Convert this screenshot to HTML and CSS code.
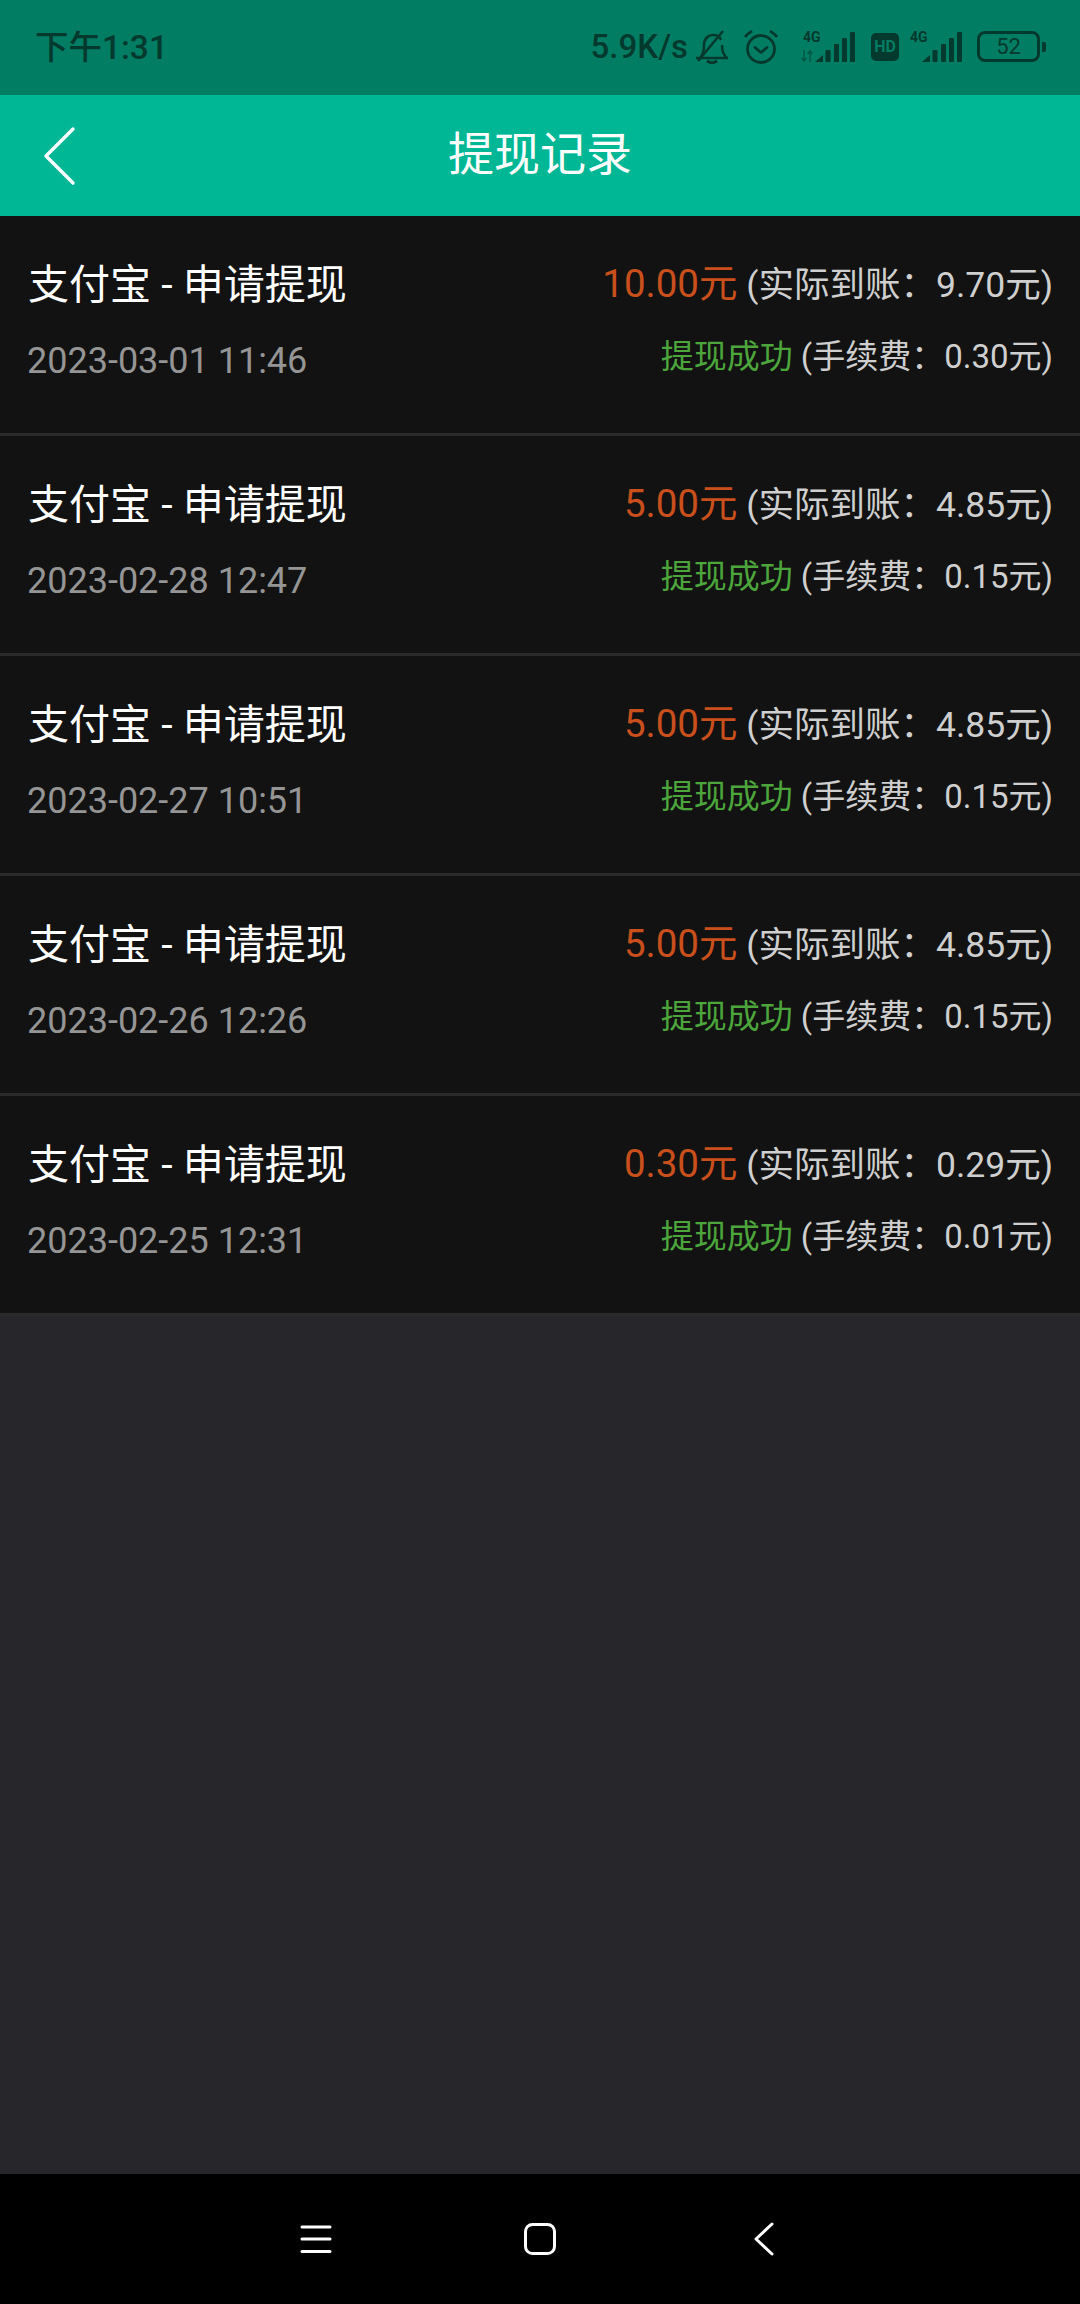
FILE: index.html
```html
<!DOCTYPE html>
<html>
<head>
  <title>提现记录</title>
  <link rel="stylesheet" href="styles.css">
</head>
<body>
  <div class="app">
    <div class="status-bar">
      <div class="status-time">下午1:31</div>
      <div class="status-icons">
        <span class="net-speed">5.9K/s</span>
        <svg class="icon-bell" width="34" height="34" viewBox="0 0 34 34" fill="none" stroke="#04392d" stroke-width="2.6">
          <path d="M1 28h32M5 28c3-3 4-7 4-13 0-6 4-10 9-10 4 0 7 2 8 5M27 15c0 6 1 10 5 13"/>
          <path d="M12 31c3 2 7 2 10 0" stroke-width="3"/>
          <path d="M3 31L28 1"/>
        </svg>
        <svg class="icon-alarm" width="36" height="34" viewBox="0 0 36 34" fill="none" stroke="#04392d" stroke-width="2.8">
          <circle cx="18" cy="19" r="13.500"/>
          <path d="M12 17.500l6 5 6-5" stroke-linecap="round" stroke-linejoin="round"/>
          <path d="M2 7c2-3 4-4 7-6M34 7c-2-3-4-4-7-6"/>
        </svg>
        <div class="signal sim1">
          <span class="net-type">4G</span>
          <svg class="arrows" width="12" height="12" viewBox="0 0 12 12" fill="none" stroke="#04392d" stroke-width="1.400" opacity="0.55">
            <path d="M3 0v11M0.500 8l2.500 3 2.500-3M9 12V1M6.500 4L9 1l2.500 3"/>
          </svg>
          <svg class="bars" width="40" height="30" viewBox="0 0 40 30" fill="#04392d">
            <path d="M0 30L8 23V30Z"/>
            <rect x="10.500" y="18" width="5" height="12" rx="1"/>
            <rect x="19" y="12" width="5" height="18" rx="1"/>
            <rect x="27" y="6" width="5" height="24" rx="1"/>
            <rect x="35" y="0" width="5" height="30" rx="1"/>
          </svg>
        </div>
        <span class="hd-badge">HD</span>
        <div class="signal sim2">
          <span class="net-type">4G</span>
          <svg class="bars" width="40" height="30" viewBox="0 0 40 30" fill="#04392d">
            <path d="M0 30L8 23V30Z"/>
            <rect x="10.500" y="18" width="5" height="12" rx="1"/>
            <rect x="19" y="12" width="5" height="18" rx="1"/>
            <rect x="27" y="6" width="5" height="24" rx="1"/>
            <rect x="35" y="0" width="5" height="30" rx="1"/>
          </svg>
        </div>
        <div class="battery">
          <div class="battery-body">52</div>
          <div class="battery-tip"></div>
        </div>
      </div>
    </div>

    <div class="header">
      <svg class="back" width="34" height="60" viewBox="0 0 34 60" fill="none" stroke="#fff" stroke-width="3.400" stroke-linecap="round" stroke-linejoin="round">
        <path d="M30 3L3 30l27 27"/>
      </svg>
      <h1>提现记录</h1>
    </div>

    <div class="list">
      <div class="row">
        <div class="line">
          <span class="name">支付宝 - 申请提现</span>
          <span class="info"><span class="amount">10.00元</span> (实际到账：9.70元)</span>
        </div>
        <div class="line second">
          <span class="date">2023-03-01 11:46</span>
          <span class="info"><span class="state">提现成功</span> (手续费：0.30元)</span>
        </div>
      </div>
      <div class="row">
        <div class="line">
          <span class="name">支付宝 - 申请提现</span>
          <span class="info"><span class="amount">5.00元</span> (实际到账：4.85元)</span>
        </div>
        <div class="line second">
          <span class="date">2023-02-28 12:47</span>
          <span class="info"><span class="state">提现成功</span> (手续费：0.15元)</span>
        </div>
      </div>
      <div class="row">
        <div class="line">
          <span class="name">支付宝 - 申请提现</span>
          <span class="info"><span class="amount">5.00元</span> (实际到账：4.85元)</span>
        </div>
        <div class="line second">
          <span class="date">2023-02-27 10:51</span>
          <span class="info"><span class="state">提现成功</span> (手续费：0.15元)</span>
        </div>
      </div>
      <div class="row">
        <div class="line">
          <span class="name">支付宝 - 申请提现</span>
          <span class="info"><span class="amount">5.00元</span> (实际到账：4.85元)</span>
        </div>
        <div class="line second">
          <span class="date">2023-02-26 12:26</span>
          <span class="info"><span class="state">提现成功</span> (手续费：0.15元)</span>
        </div>
      </div>
      <div class="row">
        <div class="line">
          <span class="name">支付宝 - 申请提现</span>
          <span class="info"><span class="amount">0.30元</span> (实际到账：0.29元)</span>
        </div>
        <div class="line second">
          <span class="date">2023-02-25 12:31</span>
          <span class="info"><span class="state">提现成功</span> (手续费：0.01元)</span>
        </div>
      </div>
    </div>

    <div class="nav-bar">
      <div class="nav-item">
        <svg width="32" height="28" viewBox="0 0 32 28" fill="none" stroke="#fff" stroke-width="3" stroke-linecap="round">
          <path d="M2 2h28M2 14h28M2 26.500h28"/>
        </svg>
      </div>
      <div class="nav-item">
        <svg width="32" height="32" viewBox="0 0 32 32" fill="none" stroke="#fff" stroke-width="3">
          <rect x="1.500" y="1.500" width="29" height="29" rx="7"/>
        </svg>
      </div>
      <div class="nav-item">
        <svg width="20" height="34" viewBox="0 0 20 34" fill="none" stroke="#fff" stroke-width="3" stroke-linecap="round" stroke-linejoin="round">
          <path d="M18 2L2 17l16 15"/>
        </svg>
      </div>
    </div>
  </div>
</body>
</html>
```

FILE: styles.css
```css
body {
  margin: 0;
  background-color: #27272b;
  font-family: Roboto, "Noto Sans CJK SC", sans-serif;
}
.app {
  width: 1080px;
  height: 2304px;
  display: flex;
  flex-direction: column;
  overflow: hidden;
}
.status-bar {
  height: 95px;
  flex: none;
  box-sizing: border-box;
  padding: 0 34px 6px 35px;
  display: flex;
  justify-content: space-between;
  align-items: center;
  background-color: #007d62;
  color: #04392d;
}
.status-time {
  font-size: 33.500px;
  font-weight: 500;
}
.status-icons {
  display: flex;
  align-items: center;
  margin-top: 4px;
}
.net-speed {
  font-size: 33px;
  font-weight: 500;
  margin-right: 7px;
}
.icon-alarm {
  margin-left: 14px;
}
.signal {
  position: relative;
  width: 54px;
  height: 30px;
  margin-left: 22px;
  display: flex;
  justify-content: flex-end;
}
.signal .net-type {
  position: absolute;
  left: 2px;
  top: -3px;
  font-size: 14px;
  line-height: 16px;
  font-weight: 700;
}
.signal .arrows {
  position: absolute;
  left: 0;
  bottom: 0;
}
.signal.sim2 {
  margin-left: 9px;
}
.hd-badge {
  width: 28px;
  height: 28px;
  margin-left: 16px;
  border-radius: 5px;
  background-color: #04392d;
  color: #007d62;
  font-size: 16px;
  line-height: 28px;
  font-weight: 700;
  text-align: center;
}
.battery {
  display: flex;
  align-items: center;
  margin-left: 15px;
}
.battery-body {
  width: 57px;
  height: 25px;
  border: 3px solid #04392d;
  border-radius: 8px;
  font-size: 22px;
  line-height: 25px;
  text-align: center;
}
.battery-tip {
  width: 4px;
  height: 10px;
  margin-left: 2px;
  border-radius: 0 2px 2px 0;
  background-color: #04392d;
}
.header {
  height: 121px;
  flex: none;
  position: relative;
  display: flex;
  justify-content: center;
  align-items: center;
  padding-bottom: 12px;
  box-sizing: border-box;
  background-color: #00b795;
}
.header h1 {
  margin: 0;
  font-size: 46px;
  font-weight: 400;
  color: #fff;
}
.back {
  position: absolute;
  left: 43px;
  top: 31px;
}
.list {
  flex: 1;
}
.row {
  height: 220px;
  box-sizing: border-box;
  padding: 36px 27px 0 28px;
  background-color: #121212;
  border-bottom: 3px solid #2a2a2b;
}
.line {
  display: flex;
  justify-content: space-between;
  align-items: center;
  height: 56px;
}
.line.second {
  margin-top: 18px;
}
.name {
  font-size: 41px;
  margin-top: 2px;
  color: #fff;
}
.date {
  font-size: 36px;
  margin: 14px 0 0 -1px;
  color: #959595;
}
.info {
  font-size: 35.500px;
  color: #cfcfcf;
}
.second .info {
  font-size: 33px;
}
.amount {
  font-size: 38.500px;
  color: #c9501c;
}
.state {
  color: #4ca63c;
}
.nav-bar {
  height: 130px;
  flex: none;
  display: flex;
  justify-content: center;
  align-items: center;
  background-color: #000;
}
.nav-item {
  width: 224px;
  display: flex;
  justify-content: center;
}
```
